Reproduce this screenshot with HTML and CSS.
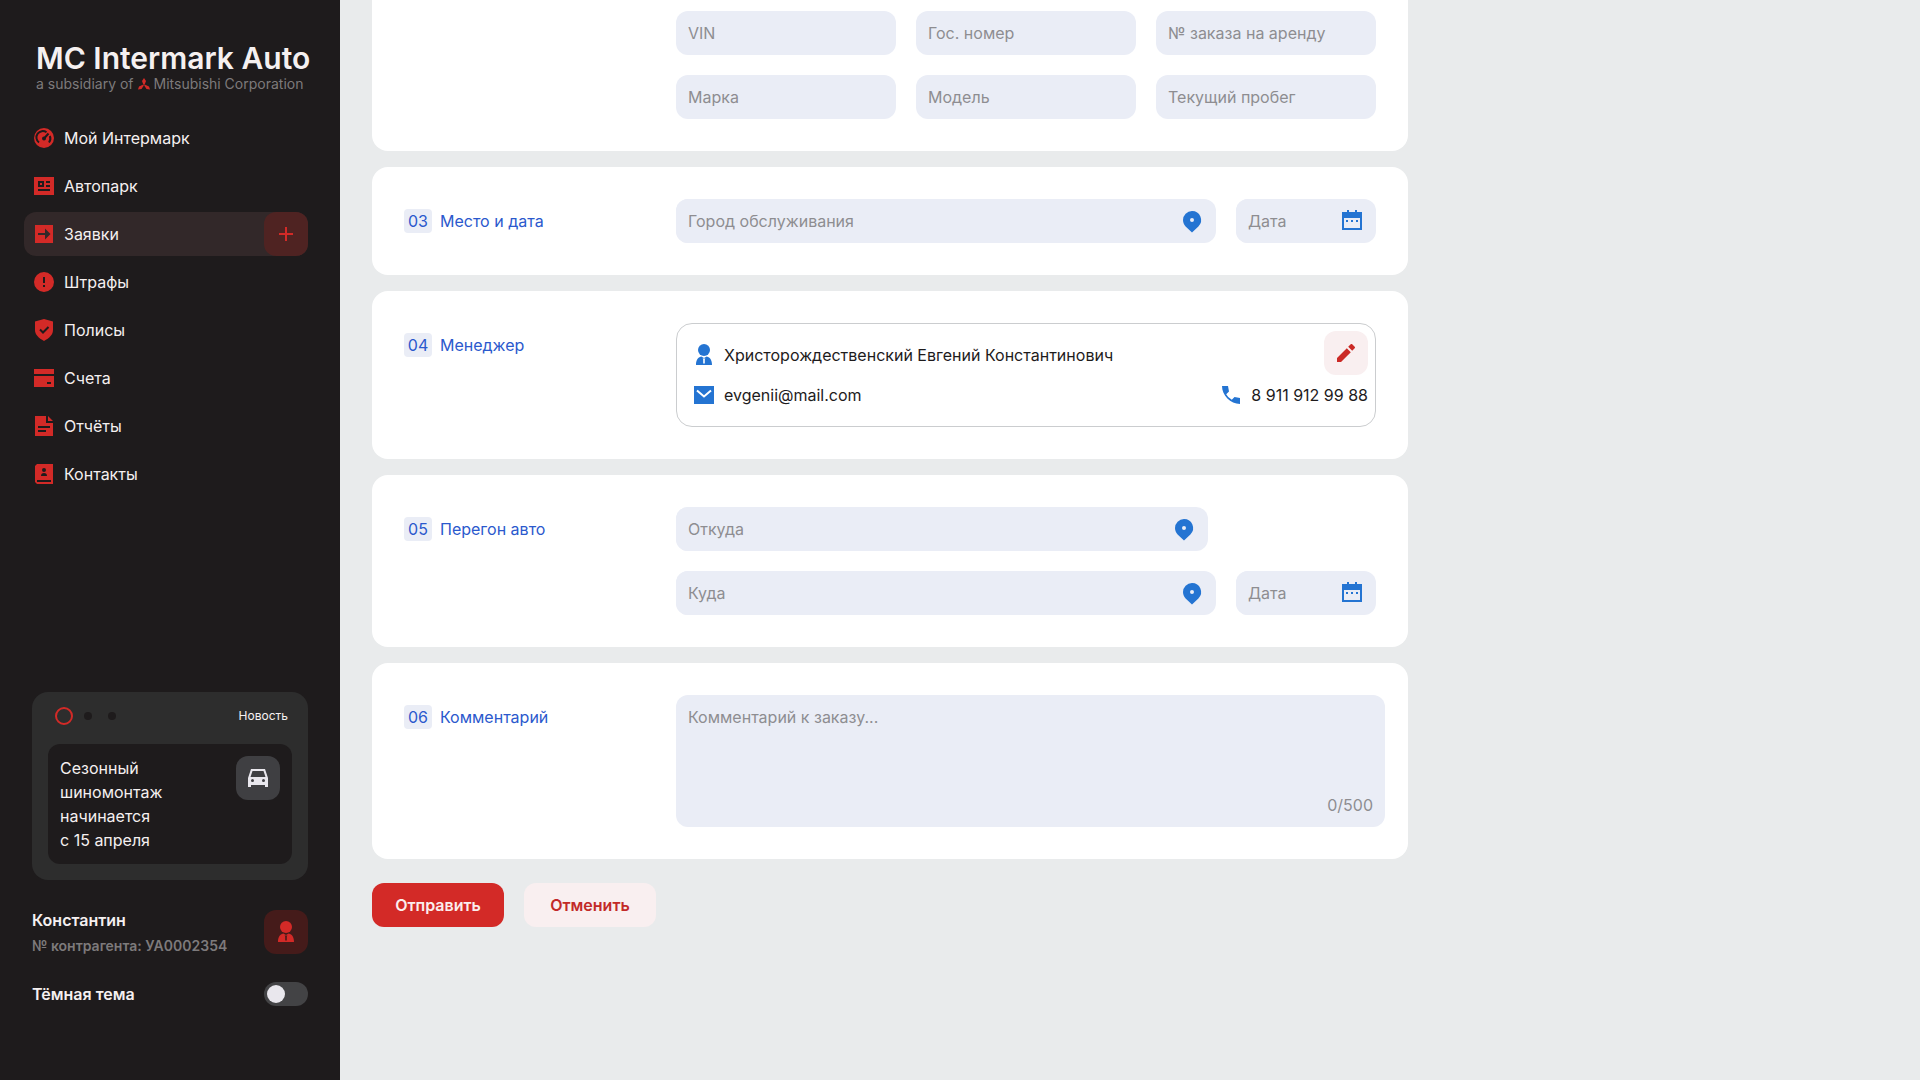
FILE: index.html
```html
<!DOCTYPE html>
<html lang="ru">
<head>
  <meta charset="UTF-8">
  <meta name="viewport" content="width=device-width, initial-scale=1">
  <title>MC Intermark Auto</title>
  <link rel="stylesheet" href="styles.css">
</head>
<body>

  <svg class="sprite" aria-hidden="true">
    <symbol id="pin" viewBox="0 0 24 24">
      <path fill-rule="evenodd" d="M12 2a9 9 0 0 0-9 9c0 2.500 1 4.700 2.600 6.400L12 23.500l6.400-6.100A9 9 0 0 0 12 2zm0 7a2 2 0 1 1 0 4 2 2 0 0 1 0-4z"/>
    </symbol>
    <symbol id="calendar" viewBox="0 0 24 24">
      <path fill-rule="evenodd" d="M7 1h2v2h6V1h2v2h5v18H2V3h5zM4 9v10h16V9zM6 11h2v2H6zm5 0h2v2h-2zm5 0h2v2h-2z"/>
    </symbol>
    <symbol id="person" viewBox="0 0 24 24">
      <circle cx="12" cy="7" r="6"/>
      <path fill-rule="evenodd" d="M4 22c0-4.500 1.800-7.500 5.200-8.400L12 15l2.800-1.400C18.200 14.500 20 17.500 20 22zM10.600 15.500l.6 1V20.500h1.600V16.500l.6-1z"/>
    </symbol>
  </svg>

  <div class="page">

    <aside class="sidebar">
      <div class="logo">
        <div class="logo-name">MC Intermark Auto</div>
        <div class="logo-sub">
          <span>a subsidiary of</span>
          <svg class="logo-mark" viewBox="0 0 14 12"><path d="M7 0l2 3-1.300 3.500h-1.400L5 3zM6.300 6.500l.5 1L4.500 11 1 11.500l1-3zM7.700 6.500l-.5 1L9.500 11l3.500.5-1-3z"/></svg>
          <span>Mitsubishi Corporation</span>
        </div>
      </div>

      <nav class="menu">
        <a class="menu-item" href="#">
          <svg class="icon" viewBox="0 0 24 24"><circle cx="12" cy="12" r="10"/><path class="cut-line" d="M7 16.500a6.300 6.300 0 0 1 7.500-10.200M17.800 10a6.300 6.300 0 0 1-.8 6.500M16.500 7.500 12.500 12"/><circle class="cut" cx="12" cy="12.500" r="2"/></svg>
          Мой Интермарк
        </a>
        <a class="menu-item" href="#">
          <svg class="icon" viewBox="0 0 24 24"><path fill-rule="evenodd" d="M2 3h20v18H2zM6 7v6h6V7zm2 2h2v2H8zM14 7v2h4V7zm0 4v2h4v-2zM6 15v2h12v-2z"/></svg>
          Автопарк
        </a>
        <div class="menu-item active">
          <a class="menu-link" href="#">
            <svg class="icon" viewBox="0 0 24 24"><path fill-rule="evenodd" d="M3 3h18v18H3zM6 11v2h7v4.500L18.500 12 13 6.500V11z"/></svg>
            Заявки
          </a>
          <button class="tile tile-add" type="button" aria-label="Добавить">
            <svg class="icon" viewBox="0 0 24 24"><path d="M11 5h2v6h6v2h-6v6h-2v-6H5v-2h6z"/></svg>
          </button>
        </div>
        <a class="menu-item" href="#">
          <svg class="icon" viewBox="0 0 24 24"><path fill-rule="evenodd" d="M12 2a10 10 0 1 0 0 20 10 10 0 0 0 0-20zm-1 5h2v6h-2zm0 8h2v2h-2z"/></svg>
          Штрафы
        </a>
        <a class="menu-item" href="#">
          <svg class="icon" viewBox="0 0 24 24"><path d="M12 1l9 2.500V12c0 4.500-3.500 8-9 11-5.500-3-9-6.500-9-11V3.500z"/><path class="cut-line" d="M8 11.500l3 3 5.500-5.500"/></svg>
          Полисы
        </a>
        <a class="menu-item" href="#">
          <svg class="icon" viewBox="0 0 24 24"><path fill-rule="evenodd" d="M2 3h20v5H2zM2 10h20v11H2zM15 16v2h4v-2z"/></svg>
          Счета
        </a>
        <a class="menu-item" href="#">
          <svg class="icon" viewBox="0 0 24 24"><path fill-rule="evenodd" d="M3 2h11v7h7v13H3zM6 12v2h12v-2zm0 4v2h8v-2zM16 2l5 5h-5z"/></svg>
          Отчёты
        </a>
        <a class="menu-item" href="#">
          <svg class="icon" viewBox="0 0 24 24"><path fill-rule="evenodd" d="M5 2h16v20H5l-2-2V4zM12 6a2 2 0 1 0 0 4 2 2 0 0 0 0-4zM9 14h6c0-2-1-3-3-3s-3 1-3 3zM5 18v2h14v-2z"/></svg>
          Контакты
        </a>
      </nav>

      <section class="news">
        <div class="news-head">
          <div class="dots">
            <span class="dot current"></span>
            <span class="dot"></span>
            <span class="dot"></span>
          </div>
          <span class="news-tag">Новость</span>
        </div>
        <div class="news-body">
          <p class="news-text">Сезонный<br>шиномонтаж<br>начинается<br>с 15 апреля</p>
          <div class="tile tile-car">
            <svg class="icon" viewBox="0 0 24 24"><path fill-rule="evenodd" d="M5 3h14l3 9v9h-3v-2H5v2H2v-9zM6.500 5 4.500 11h15l-2-6zM6.500 13a1.500 1.500 0 1 0 0 3 1.500 1.500 0 0 0 0-3zm11 0a1.500 1.500 0 1 0 0 3 1.500 1.500 0 0 0 0-3z"/></svg>
          </div>
        </div>
      </section>

      <div class="user">
        <div>
          <div class="user-name">Константин</div>
          <div class="user-id">№ контрагента: УА0002354</div>
        </div>
        <button class="tile tile-user" type="button" aria-label="Профиль">
          <svg class="icon"><use href="#person"/></svg>
        </button>
      </div>

      <div class="theme">
        <label for="theme">Тёмная тема</label>
        <input class="switch" type="checkbox" id="theme">
      </div>
    </aside>

    <main class="content">
      <form class="form">

        <section class="card card-car">
          <div class="fields grid">
            <input class="input" type="text" placeholder="VIN" aria-label="VIN">
            <input class="input" type="text" placeholder="Гос. номер" aria-label="Гос. номер">
            <input class="input" type="text" placeholder="№ заказа на аренду" aria-label="№ заказа на аренду">
            <input class="input" type="text" placeholder="Марка" aria-label="Марка">
            <input class="input" type="text" placeholder="Модель" aria-label="Модель">
            <input class="input" type="text" placeholder="Текущий пробег" aria-label="Текущий пробег">
          </div>
        </section>

        <section class="card">
          <h2 class="title"><span class="num">03</span>Место и дата</h2>
          <div class="fields">
            <div class="row">
              <div class="input-box">
                <input class="input" type="text" placeholder="Город обслуживания" aria-label="Город обслуживания">
                <svg class="icon"><use href="#pin"/></svg>
              </div>
              <div class="input-box date">
                <input class="input" type="text" placeholder="Дата" aria-label="Дата">
                <svg class="icon"><use href="#calendar"/></svg>
              </div>
            </div>
          </div>
        </section>

        <section class="card">
          <h2 class="title"><span class="num">04</span>Менеджер</h2>
          <div class="fields">
            <div class="manager">
              <div class="manager-row manager-name">
                <span class="contact"><svg class="icon"><use href="#person"/></svg>Христорождественский Евгений Константинович</span>
                <button class="tile tile-edit" type="button" aria-label="Изменить">
                  <svg class="icon" viewBox="0 0 24 24"><path d="M3 17l9.800-9.800 4 4L7 21H3zM14.200 5.800l2.500-2.500c.5-.5 1-.5 1.500 0l2.500 2.500c.5.5.5 1 0 1.500l-2.500 2.500z"/></svg>
                </button>
              </div>
              <div class="manager-row">
                <span class="contact"><svg class="icon" viewBox="0 0 24 24"><path d="M2 3h20v18H2z"/><path class="cut-line" d="M5 7.500l7 6 7-6"/></svg>evgenii@mail.com</span>
                <span class="contact"><svg class="icon" viewBox="0 0 24 24"><path d="M3 3h6l1 5.500-2.800 2.700a14 14 0 0 0 5.600 5.600l2.700-2.800 5.500 1v6C11.500 21 3 12.500 3 3z"/></svg>8 911 912 99 88</span>
              </div>
            </div>
          </div>
        </section>

        <section class="card">
          <h2 class="title"><span class="num">05</span>Перегон авто</h2>
          <div class="fields">
            <div class="input-box from">
              <input class="input" type="text" placeholder="Откуда" aria-label="Откуда">
              <svg class="icon"><use href="#pin"/></svg>
            </div>
            <div class="row">
              <div class="input-box">
                <input class="input" type="text" placeholder="Куда" aria-label="Куда">
                <svg class="icon"><use href="#pin"/></svg>
              </div>
              <div class="input-box date">
                <input class="input" type="text" placeholder="Дата" aria-label="Дата">
                <svg class="icon"><use href="#calendar"/></svg>
              </div>
            </div>
          </div>
        </section>

        <section class="card card-comment">
          <h2 class="title"><span class="num">06</span><label for="comment">Комментарий</label></h2>
          <div class="fields comment">
            <textarea id="comment" maxlength="500" placeholder="Комментарий к заказу..."></textarea>
            <span class="counter">0/500</span>
          </div>
        </section>

        <div class="buttons">
          <button class="btn btn-send" type="submit">Отправить</button>
          <button class="btn btn-cancel" type="button">Отменить</button>
        </div>

      </form>
    </main>

  </div>

</body>
</html>
```
FILE: styles.css
```css
*{
  margin: 0;
  padding: 0;
  box-sizing: border-box;
}

body{
  background-color: #e9ebec;
  color: #1e1b1c;
  font: 16px/24px Inter, "Liberation Sans", sans-serif;
}

input,
textarea,
button{
  font: inherit;
  border: none;
  outline: none;
}

button{
  cursor: pointer;
}

.sprite{
  display: none;
}

.page{
  display: flex;
  min-height: 100vh;
}

.icon{
  width: 24px;
  height: 24px;
  flex: none;
  fill: currentColor;
}

.tile{
  display: flex;
  flex: none;
  align-items: center;
  justify-content: center;
  width: 44px;
  height: 44px;
  border-radius: 12px;
}

/* sidebar */

.sidebar{
  display: flex;
  flex-direction: column;
  flex: none;
  width: 340px;
  padding: 40px 32px 74px;
  background-color: #1e1b1c;
  color: #f5f0f0;
}

.logo{
  padding-left: 4px;
  white-space: nowrap;
}

.logo-name{
  font-size: 30px;
  font-weight: 600;
  line-height: 36px;
}

.logo-sub{
  display: flex;
  align-items: center;
  font-size: 14px;
  line-height: 16px;
  color: #7d7a7b;
}

.logo-mark{
  width: 14px;
  height: 12px;
  margin: 0 3px;
  fill: #d32a27;
}

.menu{
  display: flex;
  flex-direction: column;
  gap: 4px;
  margin: 24px 0 32px -8px;
}

.menu-item{
  display: flex;
  align-items: center;
  gap: 8px;
  height: 44px;
  padding-left: 8px;
  border-radius: 12px;
  color: #f5f0f0;
  text-decoration: none;
}

.menu-item .icon{
  color: #d32a27;
}

.menu-item.active{
  background-color: #322829;
}

.menu-link{
  display: flex;
  flex: 1;
  gap: 8px;
  color: #f5f0f0;
  text-decoration: none;
}

.cut{
  fill: #1e1b1c;
}

.cut-line{
  fill: none;
  stroke: #1e1b1c;
  stroke-width: 2;
}

.tile-add{
  background-color: #4f2322;
}

.news{
  margin-top: auto;
  padding: 0 16px 16px;
  border-radius: 16px;
  background-color: #2d2d2d;
}

.news-head{
  display: flex;
  align-items: center;
  justify-content: space-between;
  height: 52px;
  padding: 0 4px 4px 7px;
}

.dots{
  display: flex;
  align-items: center;
  gap: 16px;
}

.dot{
  width: 8px;
  height: 8px;
  border-radius: 50%;
  background-color: #1e1b1c;
}

.dot.current{
  width: 18px;
  height: 18px;
  margin-right: -5px;
  border: 2px solid #d32a27;
  background: none;
}

.news-tag{
  font-size: 12px;
  line-height: 16px;
}

.news-body{
  display: flex;
  justify-content: space-between;
  padding: 12px;
  border-radius: 12px;
  background-color: #1e1b1c;
}

.tile-car{
  background-color: #3f3f42;
  color: #e9e7ed;
}

.user{
  display: flex;
  align-items: center;
  justify-content: space-between;
  margin-top: 28px;
}

.user-name,
.theme label{
  font-weight: 600;
}

.user-id{
  margin-top: 4px;
  font-size: 14px;
  font-weight: 600;
  line-height: 20px;
  color: #7d7a7b;
  white-space: nowrap;
}

.tile-user{
  background-color: #451b1a;
  color: #d32a27;
}

.theme{
  display: flex;
  align-items: center;
  justify-content: space-between;
  margin-top: 26px;
}

.switch{
  appearance: none;
  width: 44px;
  height: 24px;
  padding: 3px;
  border-radius: 12px;
  background-color: #434345;
  cursor: pointer;
}

.switch::before{
  content: "";
  display: block;
  width: 18px;
  height: 18px;
  border-radius: 50%;
  background-color: #e9e7ed;
}

.switch:checked::before{
  margin-left: auto;
}

/* request form */

.content{
  flex: 1;
  padding: 0 32px;
}

.form{
  display: flex;
  flex-direction: column;
  gap: 16px;
  max-width: 1036px;
}

.card{
  display: flex;
  padding: 32px;
  border-radius: 16px;
  background-color: #fff;
}

.card-car{
  padding-top: 11px;
  border-radius: 0 0 16px 16px;
}

.card-car .fields{
  margin-left: 272px;
}

.card-comment{
  padding-right: 23px;
}

.title{
  display: flex;
  flex: none;
  gap: 8px;
  width: 272px;
  padding-top: 10px;
  font-size: 16px;
  font-weight: 400;
  color: #2b59cd;
}

.num{
  width: 28px;
  height: 24px;
  border-radius: 4px;
  background-color: #eaedf6;
  text-align: center;
}

.fields{
  display: flex;
  flex: 1;
  flex-direction: column;
  gap: 20px;
  min-width: 0;
}

.fields.grid{
  display: grid;
  grid-template-columns: repeat(3, 1fr);
}

.row{
  display: flex;
  gap: 20px;
}

.input{
  width: 100%;
  min-width: 0;
  height: 44px;
  padding: 0 12px;
  border-radius: 12px;
  background-color: #eaedf6;
  color: #1e1b1c;
}

.input-box{
  display: flex;
  flex: 1;
  align-items: center;
  padding-right: 12px;
  border-radius: 12px;
  background-color: #eaedf6;
  color: #2474d2;
}

.input-box.date{
  flex: none;
  width: 140px;
}

.input-box.from{
  margin-right: 168px;
}

::placeholder{
  color: #8e8d91;
  opacity: 1;
}

.manager{
  display: flex;
  flex-direction: column;
  gap: 8px;
  padding: 7px 7px 19px 15px;
  border: 1px solid #cbcdcf;
  border-radius: 16px;
}

.manager-row{
  display: flex;
  align-items: center;
  justify-content: space-between;
}

.manager-name .contact{
  padding-top: 4px;
}

.contact{
  display: flex;
  align-items: center;
  gap: 8px;
}

.contact .icon{
  color: #2474d2;
}

.contact .cut-line{
  stroke: #fff;
}

.tile-edit{
  background-color: #f9eff0;
  color: #cb2a26;
}

.comment{
  gap: 0;
  padding: 10px 12px;
  border-radius: 12px;
  background-color: #eaedf6;
}

.comment textarea{
  width: 100%;
  height: 88px;
  background: none;
  resize: none;
}

.counter{
  align-self: flex-end;
  color: #8e8d91;
}

.buttons{
  display: flex;
  gap: 20px;
  margin-top: 8px;
}

.btn{
  width: 132px;
  height: 44px;
  border-radius: 12px;
  font-weight: 600;
}

.btn-send{
  background-color: #d32a27;
  color: #fbeeee;
}

.btn-cancel{
  background-color: #f9eff0;
  color: #c22a28;
}
```
